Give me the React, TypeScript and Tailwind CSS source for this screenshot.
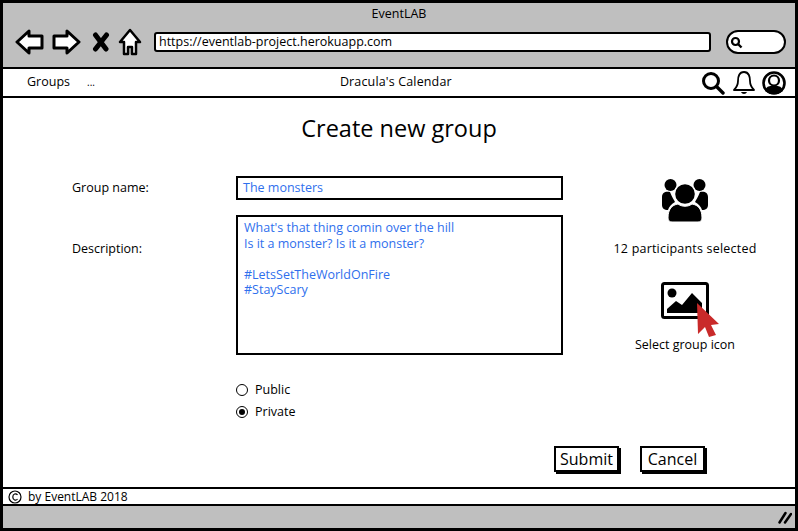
import React from 'react';

const font = { fontFamily: '"Open Sans", sans-serif' };

function Arrow({ flip }: { flip?: boolean }) {
  return (
    <svg width="30" height="28" viewBox="0 0 30 28" className={flip ? 'scale-x-[-1]' : ''}>
      <path d="M2 14 L14 3 L14 8 L27 8 L27 20 L14 20 L14 25 Z" fill="#fff" stroke="#000" strokeWidth="3" strokeLinejoin="round" />
    </svg>
  );
}

function HomeIcon() {
  return (
    <svg width="24" height="28" viewBox="0 0 24 28">
      <path d="M12 2 L22 14 L18 14 L18 26 L14 26 L14 19 L10 19 L10 26 L6 26 L6 14 L2 14 Z" fill="#fff" stroke="#000" strokeWidth="2.5" strokeLinejoin="round" />
    </svg>
  );
}

function CloseIcon() {
  return (
    <svg width="18" height="20" viewBox="0 0 18 20">
      <path d="M3.5 3 L14 17 M14.5 3 L3.5 17" stroke="#000" strokeWidth="5" strokeLinecap="round" />
    </svg>
  );
}

function SmallSearch() {
  return (
    <svg width="13" height="13" viewBox="0 0 13 13">
      <circle cx="5.5" cy="5.5" r="3.5" fill="none" stroke="#000" strokeWidth="2.2" />
      <path d="M8 8 L11.5 11.5" stroke="#000" strokeWidth="2.4" />
    </svg>
  );
}

function SearchIcon() {
  return (
    <svg width="24" height="24" viewBox="0 0 24 24">
      <circle cx="10" cy="10" r="7.5" fill="none" stroke="#000" strokeWidth="3" />
      <path d="M15.5 15.5 L22 22" stroke="#000" strokeWidth="3.4" strokeLinecap="round" />
    </svg>
  );
}

function BellIcon() {
  return (
    <svg width="24" height="25" viewBox="0 0 24 25">
      <path d="M12 2 C7 2 6 7 6 11 C6 15 4 18 2 20 L22 20 C20 18 18 15 18 11 C18 7 17 2 12 2 Z" fill="#fff" stroke="#000" strokeWidth="1.8" strokeLinejoin="round" />
      <path d="M9 22 C10 24.5 14 24.5 15 22 Z" fill="#000" />
    </svg>
  );
}

function UserIcon() {
  return (
    <svg width="24" height="24" viewBox="0 0 24 24">
      <circle cx="12" cy="12" r="10.5" fill="#fff" stroke="#000" strokeWidth="2.6" />
      <circle cx="12" cy="9.5" r="5" fill="none" stroke="#000" strokeWidth="2.2" />
      <path d="M3 20 C5 14 8 15 12 15 C16 15 19 14 21 20 L16 23 L8 23 Z" fill="#000" />
    </svg>
  );
}

function GroupIcon() {
  return (
    <svg width="48" height="46" viewBox="0 0 48 46">
      <circle cx="9.5" cy="7" r="6" fill="#000" />
      <circle cx="38.5" cy="7" r="6" fill="#000" />
      <path d="M1 19 C1 14 5 13 9 14 C11 19 13 22 14 24 C10 26 8 29 7 32 C3 32 1 30 1 27 Z" fill="#000" />
      <path d="M47 19 C47 14 43 13 39 14 C37 19 35 22 34 24 C38 26 40 29 41 32 C45 32 47 30 47 27 Z" fill="#000" />
      <circle cx="24" cy="16" r="10.5" fill="#000" stroke="#fff" strokeWidth="1.4" />
      <path d="M7 40 C7 31 11 27 17 26 C21 29 27 29 31 26 C37 27 41 31 41 40 C41 43 39 44 37 44 L11 44 C9 44 7 43 7 40 Z" fill="#000" stroke="#fff" strokeWidth="1" />
    </svg>
  );
}

function ImageIcon() {
  return (
    <svg width="48" height="38" viewBox="0 0 48 38">
      <rect x="1.5" y="1.5" width="45" height="34" rx="2" fill="#fff" stroke="#000" strokeWidth="3" />
      <circle cx="11" cy="11" r="4.5" fill="#000" />
      <path d="M6 31 L6 27 L15 19 L21 23 L31 11 L41 21 L41 31 Z" fill="#000" />
    </svg>
  );
}

function Cursor() {
  return (
    <svg width="24" height="36" viewBox="0 0 24 36">
      <path d="M1 1 L23 22 L15 23 L20 33 L13 35 L9 25 L2 32 Z" fill="#c92a2a" />
    </svg>
  );
}

function Radio({ checked, label }: { checked?: boolean; label: string }) {
  return (
    <div className="flex h-[22px] items-center gap-[7px] text-[12.5px] text-black">
      <span className="flex h-[12px] w-[12px] items-center justify-center rounded-full border-[1.5px] border-black bg-white">
        {checked ? <span className="h-[6px] w-[6px] rounded-full bg-black" /> : null}
      </span>
      {label}
    </div>
  );
}

function SketchButton({ children }: { children: React.ReactNode }) {
  return (
    <button className="h-[26px] w-[65px] border-2 border-black bg-white text-[16px] leading-none text-black shadow-[2px_2px_0_#000]">
      {children}
    </button>
  );
}

export default function App() {
  return (
    <div style={font} className="flex h-[531px] w-[798px] flex-col border-[3px] border-black bg-white text-black">
      <header className="flex h-[66px] flex-col border-b-[2px] border-black bg-[#bfbfbf]">
        <p className="pt-[3px] text-center text-[12.5px] leading-[16px]">EventLAB</p>
        <div className="flex items-center pl-[12px] pt-[6px]">
          <Arrow />
          <span className="ml-[6px]"><Arrow flip /></span>
          <span className="ml-[11px]"><CloseIcon /></span>
          <span className="ml-[8px] flex"><HomeIcon /></span>
          <div className="ml-[12px] flex h-[20px] w-[557px] items-center rounded-[3px] border-[2.5px] border-black bg-white px-[3px] text-[12.5px]">
            https://eventlab-project.herokuapp.com
          </div>
          <div className="ml-[15px] flex h-[24px] w-[60px] items-center rounded-full border-[2px] border-black bg-white pl-[2px]">
            <SmallSearch />
          </div>
        </div>
      </header>

      <nav className="flex h-[29px] items-center border-b-[2px] border-black text-[12.5px]">
        <span className="ml-[24px] w-[60px]">Groups</span>
        <span className="text-[10px]">...</span>
        <span className="ml-[245px] w-[361px] tracking-[0.15px]">Dracula's Calendar</span>
        <div className="flex items-center">
          <SearchIcon />
          <span className="ml-[7px] flex"><BellIcon /></span>
          <span className="ml-[6px] flex"><UserIcon /></span>
        </div>
      </nav>

      <main className="flex flex-1 flex-col">
        <h1 className="pt-[16px] text-center text-[23.5px] leading-[28px]">Create new group</h1>
        <div className="mt-[34px] flex">
          <div className="w-[233px] pl-[69px] text-[12.5px]">
            <p className="mt-[3px] leading-[17px]">Group name:</p>
            <p className="mt-[44px] leading-[17px]">Description:</p>
          </div>
          <div className="w-[327px]">
            <div className="flex h-[24px] items-center border-[2.5px] border-black px-[5px] text-[12.5px] text-[#2f6fed]">
              The monsters
            </div>
            <div className="mt-[15px] h-[140px] border-[2.5px] border-black px-[6px] pt-[3px] text-[12.5px] leading-[15.6px] text-[#2f6fed]">
              <p>What's that thing comin over the hill</p>
              <p>Is it a monster? Is it a monster?</p>
              <p className="h-[15.6px]" />
              <p>#LetsSetTheWorldOnFire</p>
              <p>#StayScary</p>
            </div>
            <div className="mt-[24px]">
              <Radio label="Public" />
              <Radio checked label="Private" />
            </div>
          </div>
          <div className="flex w-[232px] flex-col items-center pl-[12px] text-[12.5px]">
            <div className="mt-[2px]"><GroupIcon /></div>
            <p className="mt-[16px] leading-[17px] tracking-[0.2px]">12 participants selected</p>
            <div className="relative mt-[25px]">
              <ImageIcon />
              <span className="absolute left-[35px] top-[20px]"><Cursor /></span>
            </div>
            <p className="mt-[16px] leading-[17px]">Select group icon</p>
          </div>
        </div>
        <div className="mt-auto flex justify-end gap-[21px] pb-[15px] pr-[90px]">
          <SketchButton>Submit</SketchButton>
          <SketchButton>Cancel</SketchButton>
        </div>
      </main>

      <footer className="flex h-[19px] items-center gap-[6px] border-y-[2px] border-black pl-[5px] text-[12px]">
        <svg width="14" height="14" viewBox="0 0 14 14">
          <circle cx="7" cy="7" r="6" fill="none" stroke="#000" strokeWidth="1.2" />
          <path d="M9.5 5 C8 3 4.8 3.8 4.8 7 C4.8 10.2 8 11 9.5 9" fill="none" stroke="#000" strokeWidth="1.2" />
        </svg>
        by EventLAB 2018
      </footer>

      <div className="flex max-h-[22px] min-h-[22px] flex-1 items-center justify-end bg-[#bfbfbf] pr-[3px]">
        <svg width="14" height="13" viewBox="0 0 14 13">
          <path d="M1.5 11.5 L7.5 2 M7 11.5 L13 3" stroke="#000" strokeWidth="2.5" strokeLinecap="round" />
        </svg>
      </div>
    </div>
  );
}
